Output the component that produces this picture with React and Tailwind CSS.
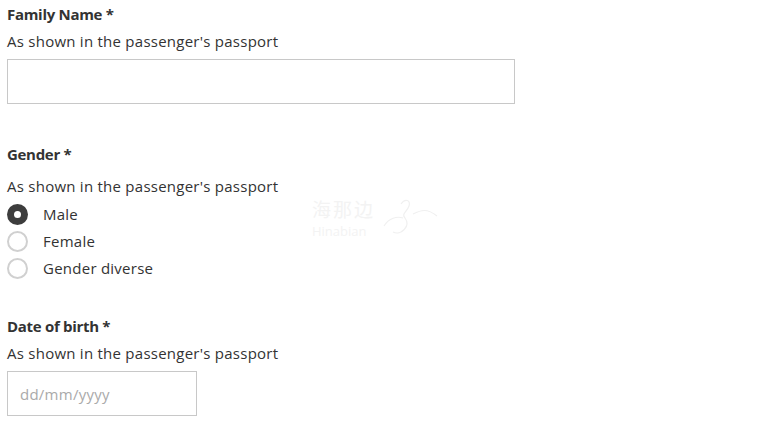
import React, { useState } from 'react'

const Hint = () => (
    <p className="text-[15px] leading-[20px] tracking-[0.25px] text-[#333]">As shown in the passenger's passport</p>
)

const Title = ({ children }) => (
    <h3 className="text-[15px] leading-[20px] font-bold tracking-[-0.3px] text-[#333]">{children}</h3>
)

const Radio = ({ label, checked, onClick }) => (
    <label className="flex items-center h-[27px] cursor-pointer" onClick={onClick}>
        <span
            className={
                checked
                    ? 'w-[21px] h-[21px] rounded-full bg-[#3d3d3d] flex items-center justify-center'
                    : 'w-[21px] h-[21px] rounded-full border-2 border-[#d0d0d0] bg-white'
            }
        >
            {checked && <span className="w-[7px] h-[7px] rounded-full bg-white" />}
        </span>
        <span className="ml-[15px] text-[15px] tracking-[0.25px] text-[#333]">{label}</span>
    </label>
)

const App = () => {
    const [gender, setGender] = useState('Male')

    return (
        <div className="relative w-[770px] h-[431px] bg-white px-[7px] pt-[4px] font-['Open_Sans',sans-serif]">
            <div>
                <Title>Family Name *</Title>
                <div className="mt-[7px]">
                    <Hint />
                </div>
                <input className="mt-[8px] block w-[508px] h-[45px] border border-[#c8c8c8] outline-none px-3" />
            </div>

            <div className="mt-[40px]">
                <Title>Gender *</Title>
                <div className="mt-[12px]">
                    <Hint />
                </div>
                <div className="mt-[5px] flex flex-col">
                    {['Male', 'Female', 'Gender diverse'].map((g) => (
                        <Radio key={g} label={g} checked={gender === g} onClick={() => setGender(g)} />
                    ))}
                </div>
            </div>

            <div className="mt-[34px]">
                <Title>Date of birth *</Title>
                <div className="mt-[7px]">
                    <Hint />
                </div>
                <input
                    placeholder="dd/mm/yyyy"
                    className="mt-[8px] block w-[190px] h-[45px] border border-[#c8c8c8] outline-none px-3 text-[15px] tracking-[0.25px] placeholder:text-[#aaa]"
                />
            </div>

            {/* watermark */}
            <div className="absolute left-[312px] top-[196px] flex items-center pointer-events-none select-none text-[#f3f3f3]">
                <div className="flex flex-col leading-none">
                    <span className="text-[19px] leading-[19px] tracking-[2px] font-['Noto_Sans_CJK_SC',sans-serif]">海那边</span>
                    <span className="text-[13px] leading-[13px] mt-[7px]">Hinabian</span>
                </div>
                <svg width="70" height="45" viewBox="0 0 70 45" fill="none" stroke="#f0f0f0" strokeWidth="1.2" className="ml-1">
                    <path d="M5 30 C10 22 18 20 24 22" />
                    <path d="M22 8 C26 2 32 4 30 10 C28 16 22 18 26 22 C32 30 22 40 14 36" />
                    <path d="M34 18 C42 14 48 12 58 20" />
                </svg>
            </div>
        </div>
    )
}

export default App
